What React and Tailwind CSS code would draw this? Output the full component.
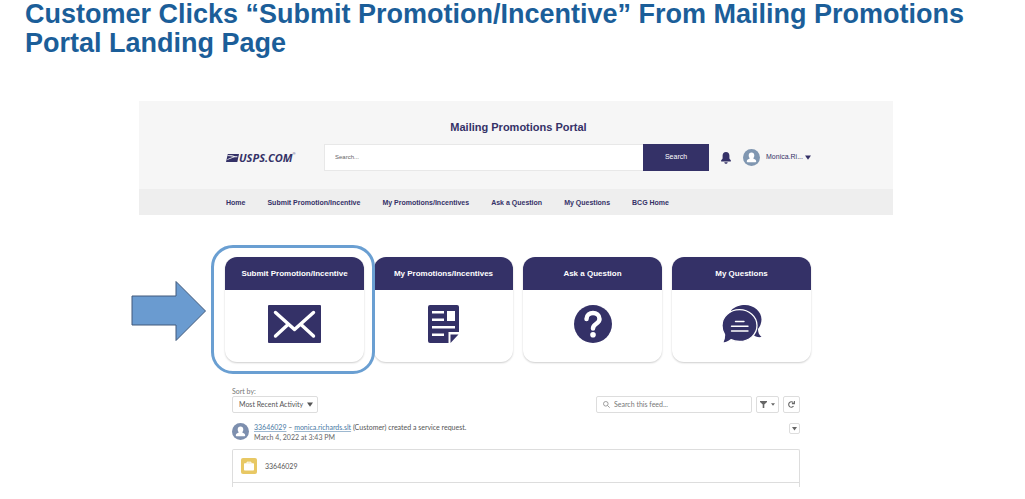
import clsx from "clsx";

const NAV_LINKS = [
  "Home",
  "Submit Promotion/Incentive",
  "My Promotions/Incentives",
  "Ask a Question",
  "My Questions",
  "BCG Home",
];

const CARDS = [
  { title: "Submit Promotion/Incentive", icon: EnvelopeIcon, highlighted: true },
  { title: "My Promotions/Incentives", icon: DocumentIcon },
  { title: "Ask a Question", icon: QuestionIcon },
  { title: "My Questions", icon: ChatIcon },
];

function EnvelopeIcon() {
  return (
    <svg width="53" height="38" viewBox="0 0 53 38" aria-hidden="true">
      <rect width="53" height="38" rx="1" fill="#343167" />
      <g fill="none" stroke="#fff" strokeWidth="3.4" strokeLinecap="round" strokeLinejoin="round">
        <path d="M7.5 7.5 L26.5 24.5 L45.5 7.5" />
        <path d="M7.5 31 L20 19.5 M45.5 31 L33 19.5" />
      </g>
    </svg>
  );
}

function DocumentIcon() {
  return (
    <svg width="31" height="38" viewBox="0 0 31 38" aria-hidden="true">
      <path
        fill="#343167"
        d="M2 0H29a2 2 0 0 1 2 2V27H20.5V38H2a2 2 0 0 1-2-2V2a2 2 0 0 1 2-2z"
      />
      <path fill="#343167" d="M22.5 29.5H30.5L22.5 38z" />
      <path
        fill="#fff"
        d="M4 6H16V8.500H4zM4 13.500H16V16H4zM19 6H27V16H19zM4 21H27V23.500H4zM4 28.500H16V31H4z"
      />
    </svg>
  );
}

function QuestionIcon() {
  return (
    <svg width="38" height="38" viewBox="0 0 38 38" aria-hidden="true">
      <circle cx="19" cy="19" r="19" fill="#343167" />
      <path
        d="M12.500 14C12.500 6 25.500 6 25.500 14C25.500 19 19 18.500 19 23.500"
        fill="none"
        stroke="#fff"
        strokeWidth="4.500"
        strokeLinecap="round"
      />
      <circle cx="19" cy="29.800" r="2.800" fill="#fff" />
    </svg>
  );
}

function ChatIcon() {
  return (
    <svg width="40" height="38" viewBox="0 0 40 38" aria-hidden="true">
      <path
        fill="#343167"
        d="M9 5.500C13 1.500 18 0 23 0C32 0 39.500 6.500 39.500 14.500C39.500 18 38 21.500 36 24C36 27 37 30 39.500 32C36 32.500 33 31.500 30.500 29.500z"
      />
      <path
        fill="#343167"
        stroke="#fff"
        strokeWidth="1.300"
        d="M17.500 4.700C27 4.700 35 11.500 35 20.500C35 29.500 27 36.500 17.500 36.500C14.500 36.500 11.500 36 9 34.700C6.500 37 3.500 38 0.500 38C2 35.500 2.700 32.500 2.500 29.500C0.700 27 0 24 0 20.500C0 11.500 8 4.700 17.500 4.700z"
      />
      <path
        d="M13.500 16.500H22M9.500 21.200H26M9.500 26H26"
        stroke="#fff"
        strokeWidth="1.400"
        strokeLinecap="round"
      />
    </svg>
  );
}

function EagleMark() {
  return (
    <svg width="13" height="8" viewBox="0 0 13 8" aria-hidden="true">
      <path fill="#343167" d="M1.800 0H13L11.300 8H0z" />
      <path
        fill="#f6f6f6"
        d="M1.600 1.200C5 1 8 1.400 9.200 2.300H11.500L11.200 3.200H8.500C6.500 3.800 3.500 4.800 1.200 6L1.400 5.200C3.500 4 6 3.200 7.500 2.700C5.500 2.200 3.500 1.900 1.500 1.900z"
      />
    </svg>
  );
}

function Avatar({ className }) {
  return (
    <svg width="17" height="17" viewBox="0 0 17 17" className={className} aria-hidden="true">
      <circle cx="8.500" cy="8.500" r="8.500" fill="currentColor" />
      <path
        fill="#fff"
        d="M8.500 3.500C10.300 3.500 11.300 4.800 11.300 6.400C11.300 7.600 10.800 8.500 10.300 9C10.200 9.400 10.400 9.600 10.700 9.700C12.200 10.300 13.200 10.900 13.200 12.200C13.200 12.800 12.800 13.200 12.200 13.200H4.800C4.200 13.200 3.800 12.800 3.800 12.200C3.800 10.900 4.800 10.300 6.300 9.700C6.600 9.600 6.800 9.400 6.700 9C6.200 8.500 5.700 7.600 5.700 6.400C5.700 4.800 6.700 3.500 8.500 3.500z"
      />
    </svg>
  );
}

function Caret({ className }) {
  return (
    <svg width="6" height="5" viewBox="0 0 6 5" className={className} aria-hidden="true">
      <path fill="currentColor" d="M0 0.500H6L3 4.800z" />
    </svg>
  );
}

function PortalHeader() {
  return (
    <header>
      <div className="bg-[#f6f6f6] pt-[18px] pb-[18px] pl-[87px] pr-[82px]">
        <h2 className="text-center text-[11px] leading-4 font-bold text-[#343167]">
          Mailing Promotions Portal
        </h2>
        <div className="mt-[9px] flex items-center">
          <a href="#home" className="flex w-[98px] items-center text-[#343167]">
            <EagleMark />
            <span className="font-['Open_Sans',sans-serif] text-[11px] leading-4 font-bold italic">
              USPS.COM
            </span>
            <span className="self-start text-[4px] leading-2">®</span>
          </a>
          <form className="flex h-[27px] flex-1">
            <input
              type="search"
              aria-label="Search"
              placeholder="Search..."
              className="min-w-0 flex-1 border border-r-0 border-[#e8e8e8] bg-white px-2.5 text-[6px] placeholder:text-[#666]"
            />
            <button type="button" className="w-[66px] bg-[#343167] text-[7px] text-white">
              Search
            </button>
          </form>
          <button type="button" aria-label="Notifications" className="ml-3 text-[#343167]">
            <svg width="10" height="12" viewBox="0 0 10 12" fill="currentColor" aria-hidden="true">
              <path d="M5 0C2.800 0 1.600 1.600 1.600 3.600V6.200C1.600 7.200 0 7.900 0 8.900C0 9.200 0.200 9.400 0.500 9.400H9.500C9.800 9.400 10 9.200 10 8.900C10 7.900 8.400 7.200 8.400 6.200V3.600C8.400 1.600 7.200 0 5 0zM3.300 10.200C3.500 11.300 4.200 11.800 5 11.800C5.800 11.800 6.500 11.300 6.700 10.200z" />
            </svg>
          </button>
          <button type="button" className="ml-3 flex items-center text-[7px] text-[#343167]">
            <Avatar className="mr-1.5 text-[#8097b1]" />
            Monica.Ri...
            <Caret className="ml-0.5" />
          </button>
        </div>
      </div>
      <nav className="flex h-[26px] items-center gap-[22px] bg-[#eee] pt-0.5 pl-[87px] text-[7px] font-bold text-[#343167]">
        {NAV_LINKS.map((label) => (
          <a key={label} href="#nav">
            {label}
          </a>
        ))}
      </nav>
    </header>
  );
}

function PortalCard({ title, icon: Icon, highlighted }) {
  return (
    <div className="relative">
      <button
        type="button"
        className="block h-[105px] w-full overflow-hidden rounded-[12px] bg-white shadow-[0_1px_2px_rgba(0,0,0,0.2)]"
      >
        <span className="flex h-[33px] items-center justify-center bg-[#343167] text-[8px] font-bold text-white">
          {title}
        </span>
        <span className="flex h-[72px] items-center justify-center pb-1">
          <Icon />
        </span>
      </button>
      {highlighted && (
        <>
          <div className="pointer-events-none absolute -inset-y-3 -right-[11px] -left-[14px] z-10 rounded-[22px] border-[3px] border-[#6a9fd2]" />
          <svg
            className="absolute top-[23px] -left-[94px]"
            width="76"
            height="62"
            viewBox="0 0 76 62"
            aria-hidden="true"
          >
            <path
              d="M1 16H45V1.500L74.500 31L45 60.500V45H1z"
              fill="#6a9bd0"
              stroke="#41597a"
              strokeWidth="1"
            />
          </svg>
        </>
      )}
    </div>
  );
}

function Feed() {
  const box = "rounded-[2px] border border-[#ddd] bg-white";
  return (
    <section className="mt-6 pr-[93px] pl-[93px] font-['Lato',sans-serif] text-[7px] text-[#555]">
      <div className="flex items-end">
        <div>
          <label htmlFor="sort" className="block leading-[10px] text-[#777]">
            Sort by:
          </label>
          <div className="relative">
            <select id="sort" className={clsx(box, "block h-[17px] w-[86px] appearance-none pl-1.5")}>
              <option>Most Recent Activity</option>
            </select>
            <Caret className="absolute top-1.5 right-[5px]" />
          </div>
        </div>
        <label className={clsx(box, "ml-auto flex h-[17px] w-[156px] items-center pl-1.5")}>
          <svg width="7" height="7" viewBox="0 0 7 7" fill="none" stroke="#888" strokeWidth="0.800" aria-hidden="true">
            <circle cx="2.800" cy="2.800" r="2.300" />
            <path d="M4.500 4.500L6.700 6.700" />
          </svg>
          <input
            type="search"
            aria-label="Search this feed"
            placeholder="Search this feed..."
            className="ml-1 min-w-0 flex-1 outline-none placeholder:text-[#777]"
          />
        </label>
        <button
          type="button"
          aria-label="Filter"
          className={clsx(box, "ml-1 flex h-[17px] w-[23px] items-center justify-center gap-1")}
        >
          <svg width="7" height="7" viewBox="0 0 7 7" fill="#666" aria-hidden="true">
            <path d="M0 0H7V1L4.300 3.500V7H2.700V3.500L0 1z" />
          </svg>
          <svg width="4" height="3" viewBox="0 0 4 3" fill="#666" aria-hidden="true">
            <path d="M0 0.300H4L2 2.800z" />
          </svg>
        </button>
        <button
          type="button"
          aria-label="Refresh"
          className={clsx(box, "ml-1 flex size-[17px] items-center justify-center")}
        >
          <svg width="7" height="7" viewBox="0 0 7 7" fill="none" stroke="#666" strokeWidth="1.100" aria-hidden="true">
            <path d="M5.500 5.200A2.700 2.700 0 1 1 5.300 1.600M6.400 0V2.600H3.900" />
          </svg>
        </button>
      </div>

      <div className="mt-[9px] flex items-start">
        <Avatar className="mt-px text-[#7d8fae]" />
        <div className="ml-[5px] leading-[10px]">
          <p>
            <a href="#request" className="text-[#4a7aa5] underline decoration-[#9db8d0]">
              33646029
            </a>{" "}
            –{" "}
            <a href="#user" className="text-[#4a7aa5] underline decoration-[#9db8d0]">
              monica.richards.slt
            </a>{" "}
            (Customer) created a service request.
          </p>
          <p className="text-[#666]">March 4, 2022 at 3:43 PM</p>
        </div>
        <button
          type="button"
          aria-label="More actions"
          className={clsx(box, "mt-px ml-auto flex size-[11px] items-center justify-center")}
        >
          <svg width="5" height="4" viewBox="0 0 5 4" fill="#666" aria-hidden="true">
            <path d="M0 0H5L2.500 3.500z" />
          </svg>
        </button>
      </div>

      <article className="mt-[7px] rounded-t-[2px] border border-b-0 border-[#ddd]">
        <div className="flex h-[33px] items-center border-b border-[#ddd] pl-2">
          <svg width="16" height="16" viewBox="0 0 16 16" aria-hidden="true">
            <rect width="16" height="16" rx="2" fill="#e8c864" />
            <path d="M6 5.500V4.200H10V5.500" fill="none" stroke="#fff" strokeWidth="1" />
            <rect x="3" y="5.300" width="10" height="7.200" rx="0.800" fill="#fff" />
          </svg>
          <span className="ml-2">33646029</span>
        </div>
        <div className="h-1" />
      </article>
    </section>
  );
}

export default function App() {
  return (
    <main className="bg-white font-['Liberation_Sans',Arial,sans-serif]">
      <h1 className="pr-8 pl-[25px] text-[27px] leading-[29px] font-bold text-[#1b5e99]">
        Customer Clicks “Submit Promotion/Incentive” From Mailing Promotions Portal Landing Page
      </h1>
      <div className="mt-[43px] mr-[132px] ml-[139px]">
        <PortalHeader />
        <div className="mt-[42px] mr-[82px] ml-[86px] grid grid-cols-4 gap-2.5">
          {CARDS.map((card) => (
            <PortalCard key={card.title} {...card} />
          ))}
        </div>
        <Feed />
      </div>
    </main>
  );
}
